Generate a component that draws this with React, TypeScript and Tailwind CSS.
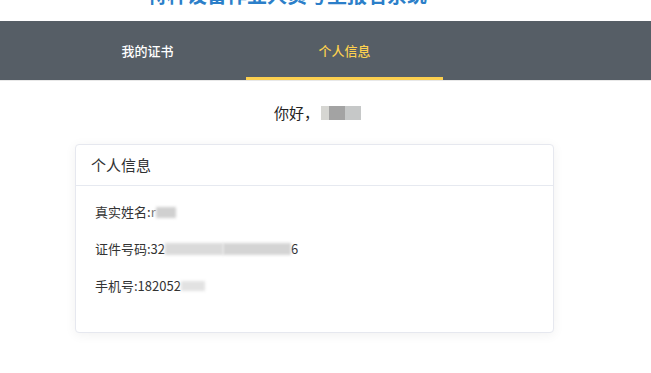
const font = { fontFamily: '"Microsoft YaHei", "Noto Sans CJK SC", sans-serif' };

function Smudge({ className }: { className: string }) {
  return <span className={`inline-block align-middle blur-[1.5px] ${className}`} />;
}

export default function App() {
  return (
    <div className="min-h-[373px] bg-white" style={font}>
      {/* page title, scrolled mostly out of view */}
      <div className="h-[21px] overflow-hidden pl-[147px]">
        <div className="-mt-[20px] text-[20px] font-bold leading-[30px] text-[#2c7fc9]">
          特种设备作业人员考生报名系统
        </div>
      </div>

      <nav className="flex h-[60px] border-b border-[#e8e8e8] bg-[#565e66] pl-[49px]">
        <div className="flex w-[197px] items-center justify-center text-[13px] font-medium text-white">
          我的证书
        </div>
        <div className="flex w-[197px] items-center justify-center border-b-[3px] border-[#fcd04f] pt-[3px] text-[13px] font-medium text-[#fcd04f]">
          个人信息
        </div>
      </nav>

      <div className="mt-[21px] flex justify-center pr-[16px] text-[15px] leading-[22px] text-[#222]">
        你好，
        <span className="ml-[2px] mt-[4px] flex h-[14px]">
          <span className="h-[14px] w-[8px] bg-[#d6d6d2] blur-[0.5px]" />
          <span className="h-[14px] w-[16px] bg-[#a3a3a3]" />
          <span className="h-[14px] w-[16px] bg-[#c6c8c8] blur-[0.5px]" />
        </span>
      </div>

      <div className="mx-[75px] mt-[20px] h-[189px] w-[479px] rounded-[4px] border border-[#e6e8ef] bg-white shadow-[0_2px_12px_rgba(0,0,0,0.06)]">
        <div className="flex h-[41px] items-center border-b border-[#e6e9f0] px-[15px] text-[15px] text-[#303133]">
          个人信息
        </div>
        <div className="flex flex-col gap-[17px] px-[19px] pt-[16px] text-[13px] leading-[20px] text-[#333]">
          <div className="flex items-center">
            真实姓名:<span className="text-[#777]">r</span>
            <Smudge className="h-[11px] w-[20px] bg-[#d0d0d0]" />
          </div>
          <div className="flex items-center">
            证件号码:32
            <Smudge className="h-[12px] w-[58px] bg-[#dadada]" />
            <Smudge className="h-[12px] w-[68px] bg-[#d4d4d4]" />
            <span>6</span>
          </div>
          <div className="flex items-center">
            手机号:182052
            <Smudge className="h-[10px] w-[24px] bg-[#e2e2e2]" />
          </div>
        </div>
      </div>
    </div>
  );
}
